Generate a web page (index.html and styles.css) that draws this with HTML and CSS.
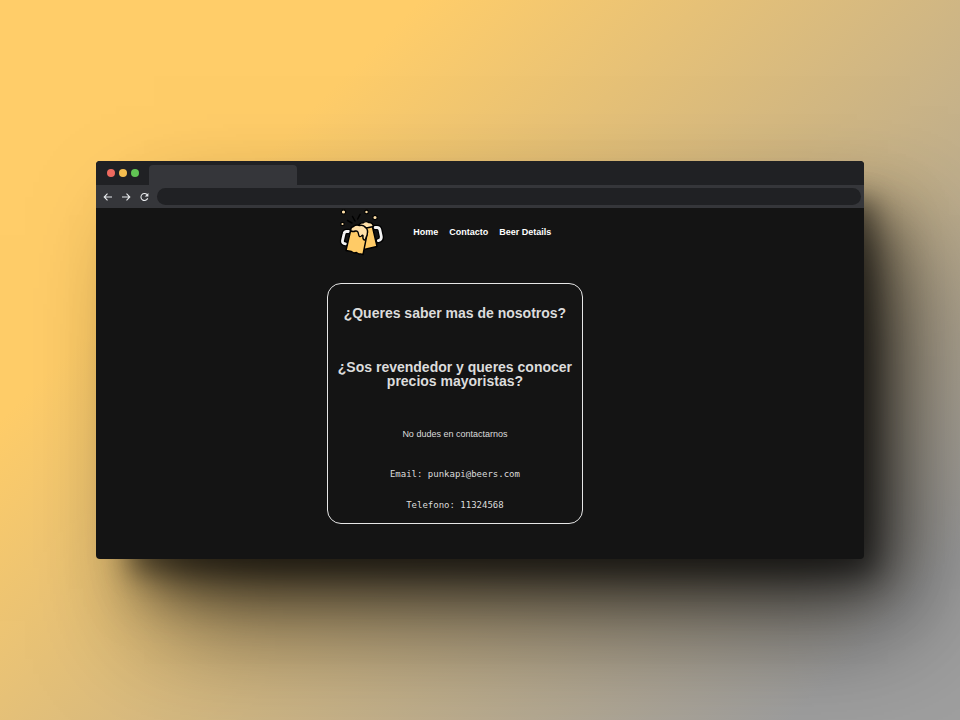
FILE: index.html
```html
<!DOCTYPE html>
<html lang="es">
<head>
<meta charset="utf-8">
<title>Contacto</title>
<link rel="stylesheet" href="styles.css">
</head>
<body>
<div class="window">
  <div class="tabs">
    <span class="light red"></span>
    <span class="light amber"></span>
    <span class="light green"></span>
    <span class="tab"></span>
  </div>
  <div class="toolbar">
    <button class="tool" type="button" aria-label="Atrás"><svg viewBox="0 0 10 10"><path d="M9 5H1.400M4.500 1.700L1.200 5l3.300 3.300"/></svg></button>
    <button class="tool" type="button" aria-label="Adelante"><svg viewBox="0 0 10 10"><path d="M1 5h7.600M5.500 1.700L8.800 5L5.500 8.300"/></svg></button>
    <button class="tool" type="button" aria-label="Recargar"><svg viewBox="0 0 10 10"><path d="M8.700 6.300A3.500 3.500 0 1 1 8.100 2.700"/><path class="tip" d="M9.400 .9v3.700H5.700z"/></svg></button>
    <input class="address" type="text" aria-label="Dirección">
  </div>
  <main class="page">
    <header class="header">
      <svg class="logo" viewBox="0 0 48 48" aria-hidden="true">
        <g fill="#ffe0a8" stroke="#000" stroke-width="1.200">
          <circle cx="5.500" cy="4" r="2.200"/><circle cx="28.500" cy="4" r="1.800"/><circle cx="37" cy="9.500" r="2.200"/><circle cx="4.500" cy="16" r="1.700"/>
        </g>
        <path d="M9.500 12.500l4.500 2.500M14.500 8.500l2.500 4.500M22 6.500l-2.300 4.500" fill="none" stroke="#000" stroke-width="1.500" stroke-linecap="round"/>
        <g fill="none" stroke-linecap="round" stroke-linejoin="round">
          <path d="M10.500 23.500H8.500Q6.500 23.500 6 26L4.500 32.500Q4 35.500 7.500 35.800" stroke="#000" stroke-width="5.400"/>
          <path d="M37 19.500h2q2.200 0 2.800 2l1.500 7q.5 3.500-3 4.200" stroke="#000" stroke-width="5.400"/>
          <path d="M10.500 23.500H8.500Q6.500 23.500 6 26L4.500 32.500Q4 35.500 7.500 35.800" stroke="#f3f3f3" stroke-width="2.800"/>
          <path d="M37 19.500h2q2.200 0 2.800 2l1.500 7q.5 3.500-3 4.200" stroke="#f3f3f3" stroke-width="2.800"/>
        </g>
        <g stroke="#000" stroke-width="1.400" stroke-linejoin="round">
          <path d="M28 18L34 17L39 38.500L26 41.500z" fill="#ffcb66"/>
          <path d="M13 21L29.500 24L25 46.500Q23 45.500 21 46L18.500 44.500L16 45L13.500 43.500L8 42.500z" fill="#ffcb66"/>
          <path d="M21 17Q22 14.500 25 15Q28 12.500 30.500 14.500Q34.500 14 35.500 18.500L28.500 20z" fill="#ffe0a8"/>
          <path d="M13 23Q12 19.500 15.500 18.500Q18 16 21.500 17.500Q25.500 16.500 27.500 19.500Q30 21.500 29.500 24Q29.500 27 28 29.500Q27.500 32.500 26 31.800Q24.500 31 25 27.500Q24.500 26.500 23.500 28Q21 30 20.500 26Q20 22.500 17.500 23Q15 24 13 23z" fill="#ffe0a8"/>
        </g>
      </svg>
      <nav class="nav">
        <a href="#home">Home</a>
        <a href="#contacto">Contacto</a>
        <a href="#beers">Beer Details</a>
      </nav>
    </header>
    <section class="card">
      <h2>¿Queres saber mas de nosotros?</h2>
      <h2>¿Sos revendedor y queres conocer precios mayoristas?</h2>
      <p class="invite">No dudes en contactarnos</p>
      <p class="detail">Email: punkapi@beers.com</p>
      <p class="detail">Telefono: 11324568</p>
    </section>
  </main>
</div>
</body>
</html>
```
FILE: styles.css
```css
* {
  box-sizing: border-box;
}

body {
  margin: 0;
  min-height: 100vh;
  display: flex;
  align-items: center;
  justify-content: center;
  background: linear-gradient(135deg, #ffcd69 25%, #9f9f9f 90%);
  font-family: "Liberation Sans", Arial, sans-serif;
  font-size: 9px;
}

.window {
  width: 80%;
  border-radius: 4px;
  overflow: hidden;
  background: #141414;
  box-shadow:
    22px 26px 24px -12px rgba(0, 0, 0, .4),
    36px 42px 50px -12px rgba(0, 0, 0, .5),
    52px 68px 106px -6px rgba(0, 0, 0, .6);
}

.tabs {
  display: flex;
  align-items: center;
  gap: 4px;
  height: 24px;
  padding-left: 11px;
  background: #202124;
}

.light {
  width: 8px;
  height: 8px;
  border-radius: 50%;
}

.red { background: #ee6a5f; }
.amber { background: #f5bd4f; }
.green { background: #61c454; }

.tab {
  align-self: flex-end;
  width: 148px;
  height: 20px;
  margin-left: 6px;
  border-radius: 4px 4px 0 0;
  background: #35363a;
}

.toolbar {
  display: flex;
  align-items: center;
  gap: 8px;
  height: 23px;
  padding: 0 3px 0 7px;
  background: #35363a;
}

.tool {
  display: flex;
  width: 10px;
  height: 10px;
  padding: 0;
  border: 0;
  background: none;
}

.tool svg {
  width: 10px;
  height: 10px;
  fill: none;
  stroke: #e8eaed;
  stroke-width: 1.1;
}

.tool .tip {
  fill: #e8eaed;
  stroke: none;
}

.address {
  flex: 1;
  height: 17px;
  padding: 0 8px;
  border: 0;
  border-radius: 9px;
  background: #202124;
  color: #e8eaed;
  font: inherit;
}

.page {
  padding: 0 0 35px 30.1%;
  color: #dcdcdc;
}

.header {
  display: flex;
  align-items: center;
  gap: 27px;
  height: 48px;
  padding-left: 11px;
}

.logo {
  width: 48px;
  height: 48px;
}

.nav {
  display: flex;
  gap: 11px;
}

.nav a {
  color: #fff;
  font-weight: bold;
  text-decoration: none;
}

.card {
  display: flex;
  flex-direction: column;
  width: 47.6%;
  margin-top: 27px;
  padding: 22px 8px 12px;
  border: 1px solid #e6e6e6;
  border-radius: 14px;
  text-align: center;
}

.card h2 {
  margin: 0 0 40px;
  font-size: 14px;
  line-height: 14px;
}

.card p {
  margin: 0;
  line-height: 12px;
}

.card .invite {
  margin-bottom: 28px;
}

.detail {
  font-family: "DejaVu Sans Mono", monospace;
}

.detail + .detail {
  margin-top: 19px;
}
```
